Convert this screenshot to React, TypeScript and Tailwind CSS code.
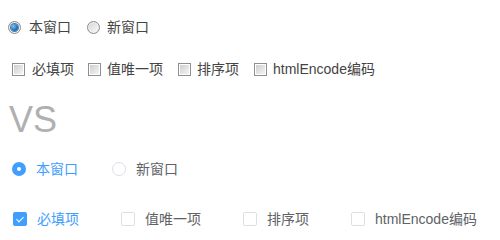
import React from "react";

const font = { fontFamily: '"Liberation Sans", "Noto Sans CJK SC", sans-serif' };

function NativeRadio({ checked }: { checked?: boolean }) {
  return (
    <span className="flex h-[13px] w-[13px] shrink-0 items-center justify-center rounded-full border border-[#8b8b8b] bg-[linear-gradient(135deg,#d4d4d4,#fbfbfb)] shadow-[inset_0_0_0_1px_#f0f0f0]">
      {checked && (
        <span className="block h-[7px] w-[7px] rounded-full bg-[radial-gradient(circle_at_35%_35%,#7fc4f0,#1e6fb8_60%,#0d4d8c)] shadow-[0_0_0_1px_#4a7fb0]" />
      )}
    </span>
  );
}

function NativeCheck() {
  return (
    <span className="flex h-[13px] w-[13px] shrink-0 items-center justify-center border border-[#8e8f8f] bg-white">
      <span className="block h-[9px] w-[9px] bg-[linear-gradient(135deg,#cfcfcf,#f4f4f4)]" />
    </span>
  );
}

function ElRadio({ checked }: { checked?: boolean }) {
  return checked ? (
    <span className="flex h-[14px] w-[14px] shrink-0 items-center justify-center rounded-full bg-[#409eff]">
      <span className="block h-[4px] w-[4px] rounded-full bg-white" />
    </span>
  ) : (
    <span className="block h-[14px] w-[14px] shrink-0 rounded-full border border-[#dcdfe6] bg-white" />
  );
}

function ElCheck({ checked }: { checked?: boolean }) {
  return checked ? (
    <span className="flex h-[14px] w-[14px] shrink-0 items-center justify-center rounded-[2px] bg-[#409eff]">
      <span className="-mt-[2px] block h-[7px] w-[4px] rotate-45 border-b border-r border-white" />
    </span>
  ) : (
    <span className="block h-[14px] w-[14px] shrink-0 rounded-[2px] border border-[#dcdfe6] bg-white" />
  );
}

export default function App() {
  return (
    <div className="h-[236px] w-[500px] overflow-hidden bg-white pt-[20px] text-[14px]" style={font}>
      {/* Row 1 native radios */}
      <div className="flex h-[14px] items-center pl-[8px] text-[#444]">
        <NativeRadio checked />
        <span className="ml-[8px]">本窗口</span>
        <span className="ml-[16px] flex"><NativeRadio /></span>
        <span className="ml-[7px]">新窗口</span>
      </div>

      {/* Row 2 native checkboxes */}
      <div className="mt-[28px] flex h-[14px] items-center pl-[12px] text-[#444]">
        <NativeCheck />
        <span className="ml-[7px]">必填项</span>
        <span className="ml-[14px] flex"><NativeCheck /></span>
        <span className="ml-[6px]">值唯一项</span>
        <span className="ml-[15px] flex"><NativeCheck /></span>
        <span className="ml-[6px]">排序项</span>
        <span className="ml-[15px] flex"><NativeCheck /></span>
        <span className="ml-[6px]">htmlEncode编码</span>
      </div>

      {/* VS */}
      <div className="mt-[26px] h-[36px] pl-[9px] text-[36px] leading-[36px] text-[#b0b0b0]">VS</div>

      {/* Row 3 element radios */}
      <div className="mt-[24px] flex h-[14px] items-center pl-[12px]">
        <ElRadio checked />
        <span className="ml-[10px] text-[#409eff]">本窗口</span>
        <span className="ml-[34px] flex"><ElRadio /></span>
        <span className="ml-[10px] text-[#606266]">新窗口</span>
      </div>

      {/* Row 4 element checkboxes */}
      <div className="mt-[36px] flex h-[14px] items-center pl-[13px]">
        <ElCheck checked />
        <span className="ml-[10px] text-[#409eff]">必填项</span>
        <span className="ml-[42px] flex"><ElCheck /></span>
        <span className="ml-[10px] text-[#606266]">值唯一项</span>
        <span className="ml-[42px] flex"><ElCheck /></span>
        <span className="ml-[10px] text-[#606266]">排序项</span>
        <span className="ml-[42px] flex"><ElCheck /></span>
        <span className="ml-[10px] text-[#606266]">htmlEncode编码</span>
      </div>
    </div>
  );
}
